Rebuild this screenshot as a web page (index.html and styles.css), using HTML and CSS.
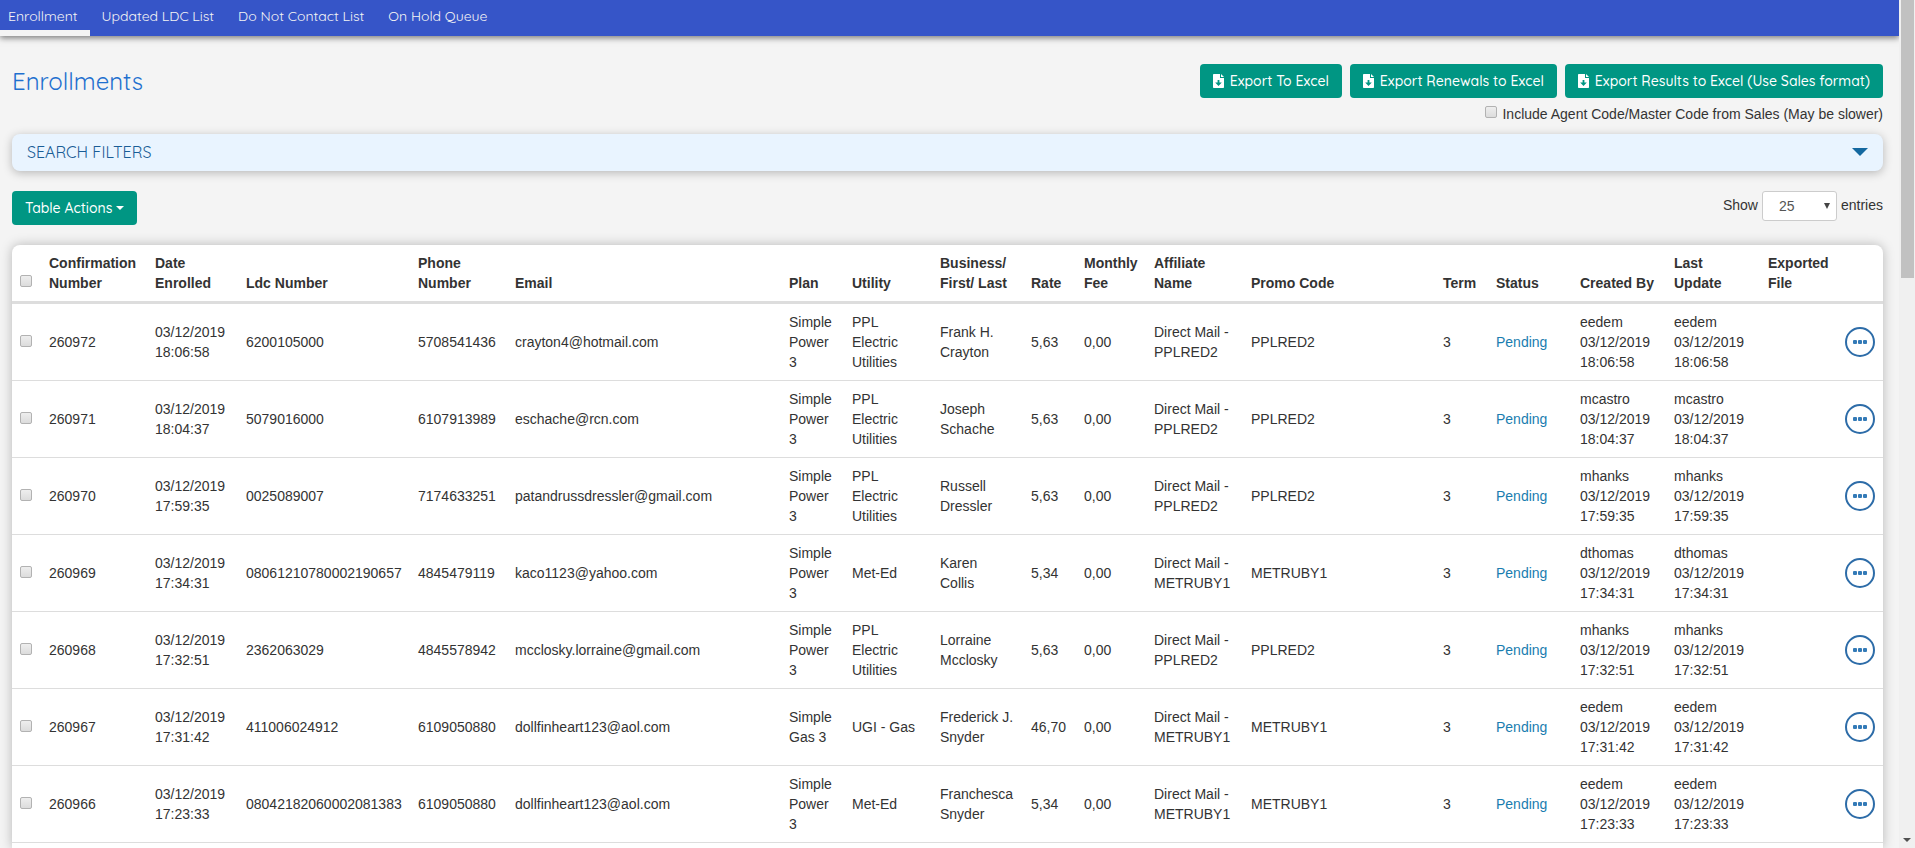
FILE: index.html
```html
<!DOCTYPE html>
<html lang="en">
<head>
  <meta charset="UTF-8" />
  <title>Enrollments</title>
  <link rel="stylesheet" href="styles.css">
</head>
<body>
  <svg class="sprite" aria-hidden="true">
    <symbol id="icon-export" viewBox="0 0 12 14">
      <path fill="currentColor" fill-rule="evenodd" d="M.8 0H7v4h4v9.2a.8.8 0 0 1-.8.8H.8a.8.8 0 0 1-.8-.8V.8A.8.8 0 0 1 .8 0zm3.8 6v2.6H2.2L5.5 12l3.3-3.4H6.4V6z"/>
      <path fill="currentColor" d="M8 0l3 3H8z"/>
    </symbol>
    <symbol id="icon-more" viewBox="0 0 14 4">
      <rect x="0" y="0" width="4" height="4" rx="1"/>
      <rect x="5" y="0" width="4" height="4" rx="1"/>
      <rect x="10" y="0" width="4" height="4" rx="1"/>
    </symbol>
  </svg>

  <div class="page">
    <nav class="navbar">
      <a class="active" href="#">Enrollment</a>
      <a href="#">Updated LDC List</a>
      <a href="#">Do Not Contact List</a>
      <a href="#">On Hold Queue</a>
    </nav>

    <main class="content">
      <div class="page-header">
        <h1>Enrollments</h1>
        <div class="exports">
          <div class="button-group">
            <button class="btn" type="button"><svg class="icon"><use href="#icon-export"/></svg>Export To Excel</button>
            <button class="btn" type="button"><svg class="icon"><use href="#icon-export"/></svg>Export Renewals to Excel</button>
            <button class="btn" type="button"><svg class="icon"><use href="#icon-export"/></svg>Export Results to Excel (Use Sales format)</button>
          </div>
          <label class="include-agent"><input type="checkbox">Include Agent Code/Master Code from Sales (May be slower)</label>
        </div>
      </div>

      <button class="filters" type="button">SEARCH FILTERS<span class="filters-arrow"></span></button>

      <div class="toolbar">
        <button class="btn" type="button">Table Actions<span class="caret"></span></button>
        <label class="page-size">Show
          <span class="select-wrap">
            <select>
              <option>10</option>
              <option selected>25</option>
              <option>50</option>
              <option>100</option>
            </select>
          </span>
          entries</label>
      </div>

      <div class="table-card">
        <table>
          <colgroup>
            <col class="col-check"><col class="col-confirmation"><col class="col-enrolled"><col class="col-ldc">
            <col class="col-phone"><col class="col-email"><col class="col-plan"><col class="col-utility">
            <col class="col-name"><col class="col-rate"><col class="col-fee"><col class="col-affiliate">
            <col class="col-promo"><col class="col-term"><col class="col-status"><col class="col-created">
            <col class="col-updated"><col class="col-exported"><col class="col-menu">
          </colgroup>
          <thead>
            <tr>
              <th><input type="checkbox" aria-label="Select all"></th>
              <th>Confirmation Number</th>
              <th>Date<br>Enrolled</th>
              <th>Ldc Number</th>
              <th>Phone<br>Number</th>
              <th>Email</th>
              <th>Plan</th>
              <th>Utility</th>
              <th>Business/<br>First/ Last</th>
              <th>Rate</th>
              <th>Monthly<br>Fee</th>
              <th>Affiliate<br>Name</th>
              <th>Promo Code</th>
              <th>Term</th>
              <th>Status</th>
              <th>Created By</th>
              <th>Last<br>Update</th>
              <th>Exported<br>File</th>
              <th></th>
            </tr>
          </thead>
          <tbody id="enrollments"></tbody>
        </table>
      </div>
    </main>
  </div>

  <div class="scrollbar">
    <div class="scrollbar-thumb"></div>
    <div class="scrollbar-down"></div>
  </div>

  <script>
    const enrollments = [
      ['260972', '18:06:58', '6200105000', '5708541436', 'crayton4@hotmail.com', 'Simple<br>Power<br>3', 'PPL<br>Electric<br>Utilities', 'Frank H.<br>Crayton', '5,63', 'PPLRED2', 'eedem'],
      ['260971', '18:04:37', '5079016000', '6107913989', 'eschache@rcn.com', 'Simple<br>Power<br>3', 'PPL<br>Electric<br>Utilities', 'Joseph<br>Schache', '5,63', 'PPLRED2', 'mcastro'],
      ['260970', '17:59:35', '0025089007', '7174633251', 'patandrussdressler@gmail.com', 'Simple<br>Power<br>3', 'PPL<br>Electric<br>Utilities', 'Russell<br>Dressler', '5,63', 'PPLRED2', 'mhanks'],
      ['260969', '17:34:31', '08061210780002190657', '4845479119', 'kaco1123@yahoo.com', 'Simple<br>Power<br>3', 'Met-Ed', 'Karen<br>Collis', '5,34', 'METRUBY1', 'dthomas'],
      ['260968', '17:32:51', '2362063029', '4845578942', 'mcclosky.lorraine@gmail.com', 'Simple<br>Power<br>3', 'PPL<br>Electric<br>Utilities', 'Lorraine<br>Mcclosky', '5,63', 'PPLRED2', 'mhanks'],
      ['260967', '17:31:42', '411006024912', '6109050880', 'dollfinheart123@aol.com', 'Simple<br>Gas 3', 'UGI - Gas', 'Frederick J.<br>Snyder', '46,70', 'METRUBY1', 'eedem'],
      ['260966', '17:23:33', '08042182060002081383', '6109050880', 'dollfinheart123@aol.com', 'Simple<br>Power<br>3', 'Met-Ed', 'Franchesca<br>Snyder', '5,34', 'METRUBY1', 'eedem']
    ];
    const date = '03/12/2019';

    document.getElementById('enrollments').innerHTML = enrollments.map(
      ([id, time, ldc, phone, email, plan, utility, name, rate, promo, user]) => `
      <tr>
        <td><input type="checkbox" aria-label="Select ${id}"></td>
        <td>${id}</td>
        <td>${date}<br>${time}</td>
        <td>${ldc}</td>
        <td>${phone}</td>
        <td>${email}</td>
        <td>${plan}</td>
        <td>${utility}</td>
        <td>${name}</td>
        <td>${rate}</td>
        <td>0,00</td>
        <td>Direct Mail -<br>${promo}</td>
        <td>${promo}</td>
        <td>3</td>
        <td><a href="#">Pending</a></td>
        <td>${user}<br>${date}<br>${time}</td>
        <td>${user}<br>${date}<br>${time}</td>
        <td></td>
        <td><button class="row-menu" type="button" aria-label="Actions for ${id}"><svg><use href="#icon-more"/></svg></button></td>
      </tr>`
    ).join('');
  </script>
</body>
</html>
```

FILE: styles.css
```css
* {
  box-sizing: border-box;
}

body {
  display: flex;
  height: 100vh;
  margin: 0;
  overflow: hidden;
  background-color: #f4f4f4;
  color: #333;
  font-family: "Liberation Sans", Arial, sans-serif;
  font-size: 14px;
  line-height: 20px;
}

.sprite {
  display: none;
}

.page {
  flex: 1;
  min-width: 0;
  display: flex;
  flex-direction: column;
}

.navbar {
  display: flex;
  height: 36px;
  background-color: #3655c8;
  box-shadow: 0 2px 6px rgba(0, 0, 0, 0.5);
}

.navbar a {
  padding: 6px 12px 0;
  border-bottom: 6px solid transparent;
  color: #f4f4f4;
  font-family: Quicksand, Lato, sans-serif;
  font-size: 14px;
  text-decoration: none;
}

.navbar a:first-child {
  padding-left: 8px;
}

.navbar .active {
  border-bottom-color: #f4f4f4;
}

.content {
  flex: 1;
  display: flex;
  flex-direction: column;
  padding: 28px 16px 0 12px;
}

.page-header {
  display: flex;
  justify-content: space-between;
  height: 70px;
}

h1 {
  margin: 0;
  color: #1f70cf;
  font-family: Quicksand, Lato, sans-serif;
  font-size: 24px;
  font-weight: normal;
  line-height: 34px;
}

.exports {
  display: flex;
  flex-direction: column;
  align-items: flex-end;
  gap: 6px;
}

.button-group {
  display: flex;
  gap: 8px;
}

.btn {
  display: flex;
  align-items: center;
  height: 34px;
  padding: 0 13px;
  border: none;
  border-radius: 4px;
  background-color: #009683;
  color: #fff;
  font-family: Quicksand, Lato, sans-serif;
  font-size: 14px;
  font-weight: 500;
  cursor: pointer;
}

.icon {
  width: 12px;
  height: 14px;
  margin-right: 5px;
}

.caret {
  margin-left: 4px;
  border: 4px solid transparent;
  border-top-color: #fff;
  border-bottom: 0;
}

input[type="checkbox"] {
  appearance: none;
  display: block;
  width: 12px;
  height: 12px;
  margin: 0;
  border: 1px solid #b2b2b2;
  border-radius: 2px;
  background: linear-gradient(#eee, #dcdcdc);
}

.include-agent {
  display: flex;
  gap: 5px;
}

.include-agent input {
  margin-top: 2px;
}

.filters {
  display: flex;
  align-items: center;
  justify-content: space-between;
  height: 37px;
  padding: 0 15px 2px;
  border: none;
  border-radius: 8px;
  background-color: #e9f4ff;
  box-shadow: 0 2px 10px rgba(0, 0, 0, 0.25);
  color: #1a5d96;
  font-family: Quicksand, Lato, sans-serif;
  font-size: 16px;
  cursor: pointer;
}

.filters-arrow {
  border: 8px solid transparent;
  border-top-color: #1468a0;
  border-bottom: 0;
}

.toolbar {
  display: flex;
  justify-content: space-between;
  margin: 20px 0;
}

.page-size {
  display: flex;
  gap: 4px;
  line-height: 28px;
}

.select-wrap {
  display: flex;
  position: relative;
}

.select-wrap::after {
  content: "";
  position: absolute;
  right: 7px;
  top: 12px;
  border: 3px solid transparent;
  border-top: 6px solid #444;
  border-bottom: 0;
  pointer-events: none;
}

select {
  appearance: none;
  width: 75px;
  height: 30px;
  padding: 0 16px;
  border: 1px solid #ccc;
  border-radius: 3px;
  background-color: #fff;
  color: #555;
  font-family: inherit;
  font-size: 14px;
}

.table-card {
  flex: 1;
  border-radius: 8px 8px 0 0;
  background-color: #fff;
  box-shadow: 0 0 12px rgba(0, 0, 0, 0.25);
}

table {
  width: 100%;
  table-layout: fixed;
  border-collapse: separate;
  border-spacing: 0;
}

th,
td {
  padding: 8px;
  text-align: left;
}

th {
  border-bottom: 3px solid #ddd;
  vertical-align: bottom;
}

td {
  border-bottom: 1px solid #ddd;
  vertical-align: middle;
  white-space: nowrap;
}

th input[type="checkbox"] {
  margin-bottom: 6px;
}

td input[type="checkbox"] {
  margin-bottom: 2px;
}

td a {
  color: #1a7db0;
  text-decoration: none;
}

.col-check { width: 29px; }
.col-confirmation { width: 106px; }
.col-enrolled { width: 91px; }
.col-ldc { width: 172px; }
.col-phone { width: 97px; }
.col-email { width: 274px; }
.col-plan { width: 63px; }
.col-utility { width: 88px; }
.col-name { width: 91px; }
.col-rate { width: 53px; }
.col-fee { width: 70px; }
.col-affiliate { width: 97px; }
.col-promo { width: 192px; }
.col-term { width: 53px; }
.col-status { width: 84px; }
.col-created { width: 94px; }
.col-updated { width: 94px; }
.col-exported { width: 77px; }
.col-menu { width: 46px; }

.row-menu {
  display: flex;
  align-items: center;
  justify-content: center;
  width: 30px;
  height: 30px;
  padding: 0;
  border: 2px solid #2d6ca8;
  border-radius: 50%;
  background: none;
  cursor: pointer;
}

.row-menu svg {
  width: 14px;
  height: 4px;
  fill: #337ab7;
}

.scrollbar {
  display: flex;
  flex-direction: column;
  justify-content: space-between;
  align-items: center;
  width: 16px;
  padding-bottom: 6px;
  background-color: #f0f0f0;
}

.scrollbar-thumb {
  width: 13px;
  height: 278px;
  background-color: #c1c1c1;
}

.scrollbar-down {
  border: 4px solid transparent;
  border-top-color: #505050;
  border-bottom: 0;
}
```
